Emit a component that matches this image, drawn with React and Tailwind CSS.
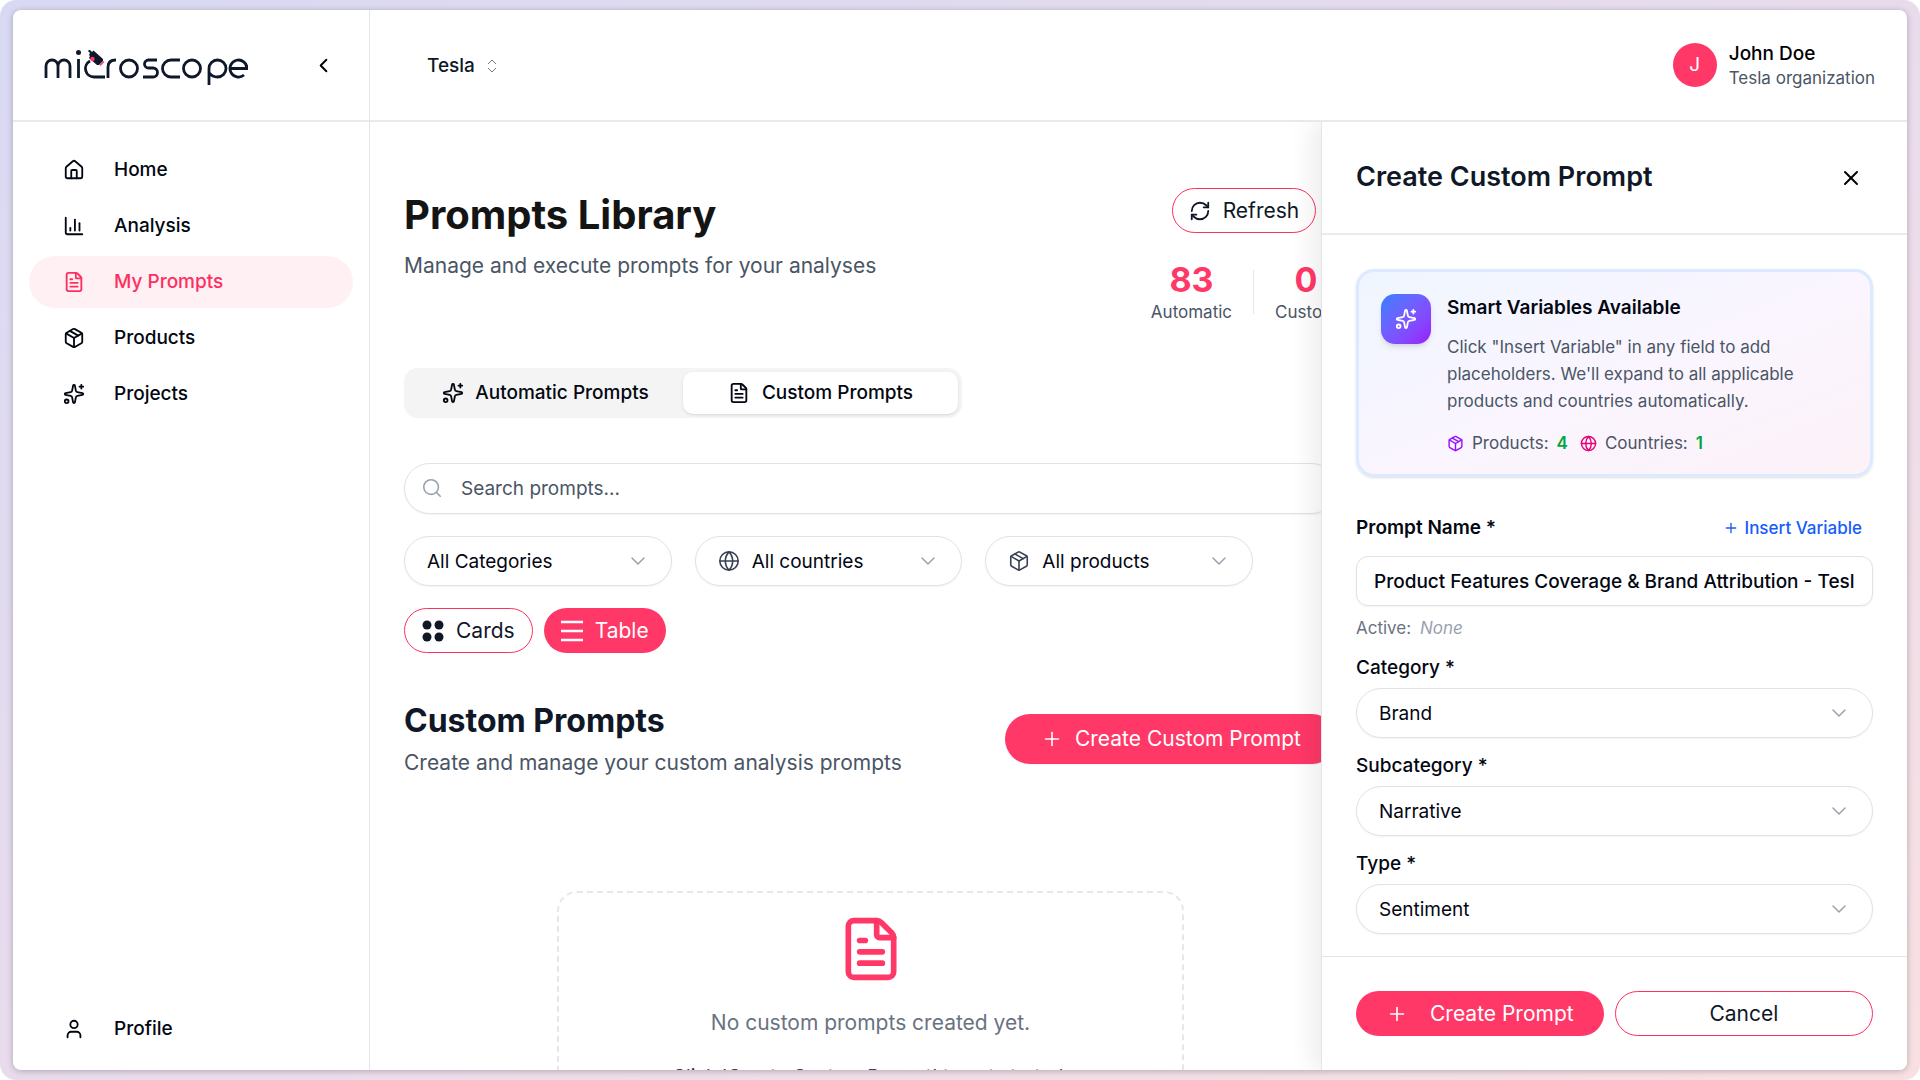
import React, { useState } from 'react';
import {
  House, ChartColumn, FileText, Package, Sparkles, User, ChevronLeft, ChevronDown, ChevronsUpDown,
  RefreshCw, Search, Globe, Plus, X,
} from 'lucide-react';

const navLinks = [
  { name: 'Home', icon: House },
  { name: 'Analysis', icon: ChartColumn },
  { name: 'My Prompts', icon: FileText, active: true },
  { name: 'Products', icon: Package },
  { name: 'Projects', icon: Sparkles },
];

const filters = [
  { label: 'All Categories' },
  { label: 'All countries', icon: Globe },
  { label: 'All products', icon: Package },
];

const Logo = () => (
  <svg viewBox="0 0 204 36" className="h-9 w-[204px]" fill="none" stroke="#0f172a" strokeWidth="2.8" role="img" aria-label="microscope">
    <path d="M2 28V16a6 6 0 0 1 12 0v12M14 16a6 6 0 0 1 12 0v12" />
    <path d="M34.500 9v19" />
    <circle cx="34.500" cy="2.500" r="2.500" fill="#0f172a" stroke="none" />
    <path d="M61 27H50a8.500 8.500 0 0 1-4-16" />
    <path d="M64 28V17q0-7 8-7" />
    <circle cx="85" cy="18.500" r="8.500" />
    <path d="M113 10h-8.500a4 4 0 0 0 0 8h4.500a4.500 4.500 0 0 1 0 9h-10" />
    <path d="M136 27h-9a8.500 8.500 0 0 1 0-17h9" />
    <circle cx="148" cy="18.500" r="8.500" />
    <path d="M165 35V18.500a8.500 8.500 0 1 1 8.500 8.500c-3 0-6-1-8-4" />
    <path d="M187 18.500h16a8.500 8.500 0 1 0-3 6.500" />
    {/* microscope tube sitting on the "c" */}
    <g stroke="none">
      <path d="M44 1l1.500-1.500L48 2l1.500-1.500 9.500 8.500v2l-4 4h-2L45 8l1-2-1-1 1-2z" fill="#0f172a" />
      <circle cx="48.500" cy="9" r="2.200" fill="#ff3868" />
    </g>
    <path d="M56 15.500l4-4" stroke="#ff3868" strokeWidth="1.500" />
  </svg>
);

const PillSelect = ({ id, label, value, icon: Icon }) => (
  <div className="relative flex-1">
    {Icon && <Icon size={22} strokeWidth={1.75} className="pointer-events-none absolute left-[23px] top-3.5 text-gray-700" />}
    <select
      id={id}
      aria-label={label}
      className={`h-[50px] w-full appearance-none rounded-full border border-[#e2e2e4] bg-white pr-12 pt-0.5 text-[19px] text-gray-950 shadow-xs ${Icon ? 'pl-14' : 'pl-[22px]'}`}
    >
      <option>{value}</option>
    </select>
    <ChevronDown size={24} strokeWidth={1.5} className="pointer-events-none absolute right-[22px] top-[13px] text-gray-400" />
  </div>
);

const Field = ({ id, label, value }) => (
  <div className="mt-4">
    <label htmlFor={id} className="block pb-2 text-[19px] font-medium leading-6 text-gray-950">{label} *</label>
    <div className="flex">
      <PillSelect id={id} value={value} />
    </div>
  </div>
);

const Sidebar = () => (
  <aside className="flex w-[357px] shrink-0 flex-col border-r border-[#e4e4e7]">
    <div className="flex h-[112px] items-center justify-between border-b-2 border-[#e9e9eb] pl-[31px] pr-[34px]">
      <div className="pt-1.5">
        <Logo />
      </div>
      <button aria-label="Collapse sidebar" className="text-black"><ChevronLeft size={23} strokeWidth={2} /></button>
    </div>
    <nav className="flex flex-1 flex-col gap-1 px-4 pt-[22px] pb-[15px]">
      {navLinks.map(({ name, icon: Icon, active }) => (
        <a
          key={name}
          href="#"
          className={`flex h-[52px] items-center gap-[29px] rounded-full pl-[34px] text-[19px] font-medium ${active ? 'bg-[#fff0f3] text-[#fe2f60]' : 'text-gray-950'}`}
        >
          <Icon size={22} strokeWidth={2} />
          {name}
        </a>
      ))}
      <a href="#" className="mt-auto flex h-[52px] items-center gap-[29px] rounded-full pl-[34px] text-[19px] font-medium text-gray-950">
        <User size={22} strokeWidth={2} />
        Profile
      </a>
    </nav>
  </aside>
);

const Topbar = () => (
  <header className="flex h-[112px] shrink-0 items-center justify-between border-b-2 border-[#e9e9eb] pl-[57px] pr-8">
    <button className="flex items-center gap-2 pt-0.5 text-[19px] font-medium text-gray-900">
      Tesla
      <ChevronsUpDown size={18} strokeWidth={1.25} className="text-gray-500" />
    </button>
    <div className="flex items-center gap-3">
      <div className="flex size-11 items-center justify-center rounded-full bg-[#ff3868] text-[19px] text-white">J</div>
      <div className="pt-0.5">
        <p className="text-[19px] font-medium leading-6 text-black">John Doe</p>
        <p className="text-[17px] leading-6 text-gray-600">Tesla organization</p>
      </div>
    </div>
  </header>
);

const PromptsPage = () => (
  <main className="min-w-0 flex-1 overflow-hidden pl-[34px] pr-[38px] pt-[66px]">
    <div className="flex items-start justify-between">
      <div>
        <h1 className="text-[40px] font-bold leading-[54px] text-[#141414]">Prompts Library</h1>
        <p className="pt-2 text-[21px] leading-8 text-gray-600">Manage and execute prompts for your analyses</p>
      </div>
      <div className="flex flex-col items-center gap-[27px]">
        <button className="flex h-[45px] items-center gap-3 rounded-full border border-[#ff2f60] px-4 text-[21px] text-gray-900">
          <RefreshCw size={22} strokeWidth={2} />
          Refresh
        </button>
        <div className="flex items-center gap-[21px] text-center">
          <div>
            <p className="text-[34px] font-bold leading-10 text-[#ff3868]">83</p>
            <p className="text-[17px] leading-6 text-gray-600">Automatic</p>
          </div>
          <div className="h-11 w-px bg-gray-200" />
          <div>
            <p className="text-[34px] font-bold leading-10 text-[#ff3868]">0</p>
            <p className="text-[17px] leading-6 text-gray-600">Custom</p>
          </div>
        </div>
      </div>
    </div>

    <div className="mt-11 flex h-[50px] w-[558px] rounded-[14px] bg-[#f4f4f4] p-1">
      <button className="flex flex-1 items-center justify-center gap-[11px] text-[19px] font-medium text-gray-950">
        <Sparkles size={22} strokeWidth={2} />
        Automatic Prompts
      </button>
      <button className="flex flex-1 items-center justify-center gap-3 rounded-[10px] bg-white text-[19px] font-medium text-gray-950 shadow-sm">
        <FileText size={22} strokeWidth={2} />
        Custom Prompts
      </button>
    </div>

    <div className="relative mt-[45px]">
      <Search size={22} strokeWidth={1.75} className="absolute left-[17px] top-3.5 text-gray-400" />
      <input
        type="search"
        aria-label="Search prompts"
        placeholder="Search prompts..."
        className="block h-[51px] w-full rounded-full border border-[#e2e2e4] bg-white pl-14 text-[19px] shadow-xs placeholder:text-gray-600"
      />
    </div>

    <div className="mt-[22px] flex w-[849px] gap-[23px]">
      {filters.map(({ label, icon }) => (
        <PillSelect key={label} label={label} value={label} icon={icon} />
      ))}
    </div>

    <div className="mt-[22px] flex gap-[11px]">
      <button className="flex h-[45px] items-center gap-3 rounded-full border border-[#ff2f60] px-[17px] text-[21px] text-gray-900">
        <svg viewBox="0 0 22 22" className="size-[22px]" fill="currentColor">
          <circle cx="5" cy="5" r="4.500" /><circle cx="17" cy="5" r="4.500" />
          <circle cx="5" cy="17" r="4.500" /><circle cx="17" cy="17" r="4.500" />
        </svg>
        Cards
      </button>
      <button className="flex h-[45px] items-center gap-3 rounded-full bg-[#ff3868] px-[17px] text-[21px] text-white">
        <svg viewBox="0 0 22 22" className="size-[22px]" stroke="currentColor" strokeWidth="2.5">
          <path d="M0 2h22M0 11h22M0 20h22" />
        </svg>
        Table
      </button>
    </div>

    <div className="mt-[45px] flex items-center justify-between">
      <div>
        <h2 className="text-[32px] font-bold leading-[45px] text-gray-900">Custom Prompts</h2>
        <p className="pt-1 text-[21px] leading-8 text-gray-600">Create and manage your custom analysis prompts</p>
      </div>
      <button className="flex h-[50px] items-center gap-3 rounded-full bg-[#ff3868] px-9 text-[21px] text-white shadow-xs">
        <Plus size={22} strokeWidth={1.75} />
        Create Custom Prompt
      </button>
    </div>

    <div className="mx-auto mt-28 flex w-[627px] flex-col items-center rounded-[20px] border-2 border-dashed border-gray-200 px-10 pb-10 pt-[22px] text-center">
      <FileText size={68} strokeWidth={2} className="text-[#ff3868]" />
      <p className="pt-6 text-[21px] leading-8 text-gray-500">No custom prompts created yet.</p>
      <p className="pt-[22px] text-[19px] leading-8 text-gray-700">Click 'Create Custom Prompt' to get started.</p>
    </div>
  </main>
);

const CreatePromptSheet = () => {
  const [name, setName] = useState('Product Features Coverage & Brand Attribution - Tesla');

  return (
    <section className="z-10 -ml-[54px] flex w-[586px] shrink-0 flex-col border-l border-[#e4e4e7] bg-white shadow-[-8px_0_24px_rgba(0,0,0,0.08)]">
      <div className="flex h-[113px] items-center justify-between border-b-2 border-[#ebebed] pl-[34px] pr-11">
        <h2 className="text-[27px] font-semibold text-gray-900">Create Custom Prompt</h2>
        <button aria-label="Close" className="text-black"><X size={24} strokeWidth={2} /></button>
      </div>

      <div className="flex-1 overflow-hidden px-[34px] pt-[34px]">
        <div className="flex gap-4 rounded-[18px] border-[3px] border-blue-100 bg-linear-to-br from-blue-50 via-purple-50 to-pink-50 px-[22px] pb-[19px] pt-[22px] shadow-sm">
          <div className="flex size-[50px] shrink-0 items-center justify-center rounded-[14px] bg-linear-to-br from-blue-500 to-purple-600 text-white shadow-md">
            <Sparkles size={22} strokeWidth={2} />
          </div>
          <div className="text-[17px] text-gray-600">
            <h3 className="text-[19px] font-semibold leading-7 text-gray-950">Smart Variables Available</h3>
            <p className="pt-3 leading-[27px]">
              Click "Insert Variable" in any field to add placeholders. We'll expand to all applicable products and countries automatically.
            </p>
            <div className="flex items-center gap-3 pt-4 leading-6">
              <span className="flex items-center gap-2">
                <Package size={17} className="text-purple-600" /> Products: <b className="font-semibold text-green-600">4</b>
              </span>
              <span className="flex items-center gap-2">
                <Globe size={17} className="text-pink-600" /> Countries: <b className="font-semibold text-green-600">1</b>
              </span>
            </div>
          </div>
        </div>

        <div className="flex items-center justify-between pb-4 pr-[11px] pt-[39px]">
          <label htmlFor="prompt-name" className="text-[19px] font-semibold leading-6 text-gray-950">Prompt Name *</label>
          <button className="flex items-center gap-1.5 text-[17px] font-medium leading-6 text-[#155dfc]">
            <Plus size={16} strokeWidth={2} />
            Insert Variable
          </button>
        </div>
        <input
          id="prompt-name"
          value={name}
          onChange={(e) => setName(e.target.value)}
          className="block h-[50px] w-full rounded-xl border border-[#e2e2e4] bg-white px-[17px] text-[19px] font-medium text-gray-950 shadow-xs"
        />
        <p className="pt-2.5 text-[17px] leading-6 text-gray-500">Active: <i className="pl-1 text-gray-400">None</i></p>
        <Field id="category" label="Category" value="Brand" />
        <Field id="subcategory" label="Subcategory" value="Narrative" />
        <Field id="type" label="Type" value="Sentiment" />
      </div>

      <div className="flex gap-[11px] border-t border-[#e4e4e7] p-[34px]">
        <button className="flex h-[45px] items-center gap-[22px] rounded-full bg-[#ff3868] px-[30px] text-[21px] text-white">
          <Plus size={22} strokeWidth={1.75} />
          Create Prompt
        </button>
        <button className="h-[45px] flex-1 rounded-full border border-[#ff2f60] text-[21px] text-gray-900">Cancel</button>
      </div>
    </section>
  );
};

const App = () => (
  <div className="h-screen bg-white font-['Inter',sans-serif]">
    <div className="h-full rounded-2xl bg-linear-to-br from-[#d9d9f3] via-[#e8dcec] to-[#f8e0e2] px-[13px] py-2.5">
      <div className="flex h-full overflow-hidden rounded-lg bg-white shadow-[0_1px_6px_rgba(0,0,0,0.25)]">
        <Sidebar />
        <div className="flex min-w-0 flex-1 flex-col">
          <Topbar />
          <div className="flex min-h-0 flex-1 overflow-hidden">
            <PromptsPage />
            <CreatePromptSheet />
          </div>
        </div>
      </div>
    </div>
  </div>
);

export default App;
